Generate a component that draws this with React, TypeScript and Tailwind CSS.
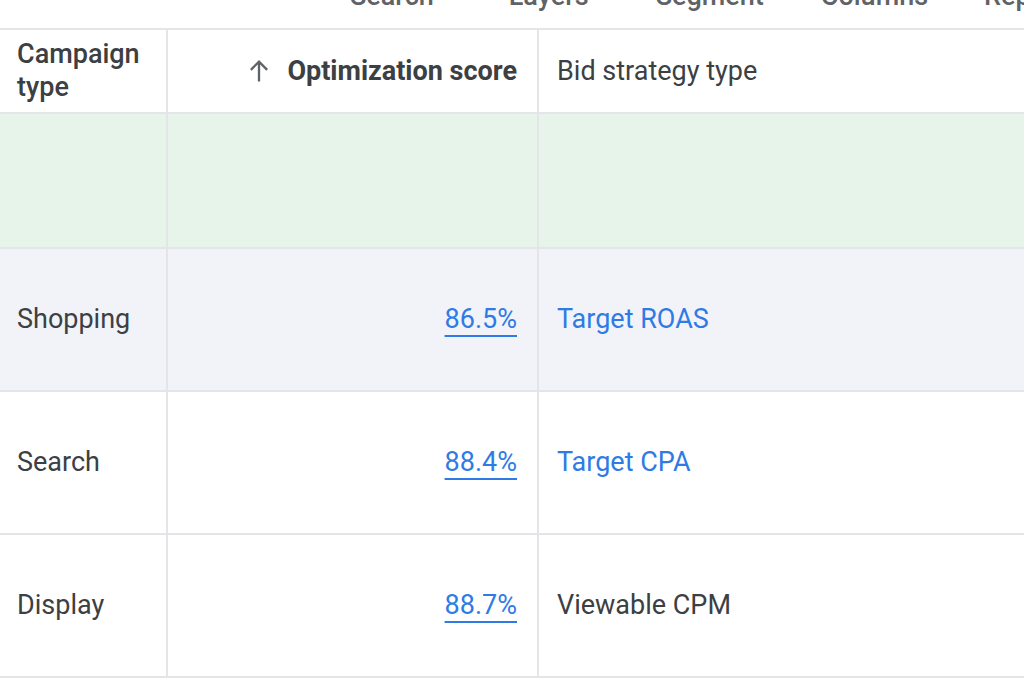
import React from 'react';

type Row = {
  type: string;
  score: string;
  strategy: string;
  link: boolean;
  bg: string;
};

const rows: Row[] = [
  { type: 'Shopping', score: '86.5%', strategy: 'Target ROAS', link: true, bg: 'bg-[#f1f3f8]' },
  { type: 'Search', score: '88.4%', strategy: 'Target CPA', link: true, bg: 'bg-white' },
  { type: 'Display', score: '88.7%', strategy: 'Viewable CPM', link: false, bg: 'bg-white' },
];

const tools = [
  { label: 'Search', cls: 'ml-[350px]' },
  { label: 'Layers', cls: 'ml-[75px]' },
  { label: 'Segment', cls: 'ml-[67px]' },
  { label: 'Columns', cls: 'ml-[57px]' },
  { label: 'Reports', cls: 'ml-[56px]' },
];

export default function App() {
  return (
    <div className="w-[1024px] h-[683px] overflow-hidden bg-white text-[#3c4043] font-['Roboto',sans-serif]">
      {/* toolbar, only the bottom of the labels is visible */}
      <div className="h-[28px] overflow-hidden">
        <div className="flex -mt-[24px] text-[27px] font-medium text-[#5f6368] whitespace-nowrap">
          {tools.map((t) => (
            <span key={t.label} className={t.cls}>
              {t.label}
            </span>
          ))}
        </div>
      </div>

      <div className="border-t-2 border-[#e3e5e8]">
        {/* header */}
        <div className="grid grid-cols-[168px_371px_1fr] h-[84px] border-b-2 border-[#e3e5e8]">
          <div className="flex items-center pl-[17px] border-r-2 border-[#e3e5e8] text-[27px] leading-[33px] font-medium">
            Campaign
            <br />
            type
          </div>
          <div className="flex items-center justify-end gap-[14px] pr-[20px] border-r-2 border-[#e3e5e8] text-[27px] font-bold">
            <svg width="28" height="28" viewBox="0 0 24 24" fill="none" stroke="#5f6368" strokeWidth="2">
              <path d="M12 21V4M5 11l7-7 7 7" />
            </svg>
            <span>Optimization score</span>
          </div>
          <div className="flex items-center pl-[18px] text-[27px]">Bid strategy type</div>
        </div>

        {/* total / summary row */}
        <div className="grid grid-cols-[168px_371px_1fr] h-[135px] bg-[#e6f4ea] border-b-2 border-[#e3e5e8]">
          <div className="border-r-2 border-[#e3e5e8]" />
          <div className="border-r-2 border-[#e3e5e8]" />
          <div />
        </div>

        {rows.map((r) => (
          <div
            key={r.type}
            className={`grid grid-cols-[168px_371px_1fr] h-[143px] border-b-2 border-[#e3e5e8] text-[27px] ${r.bg}`}
          >
            <div className="flex items-center pl-[17px] border-r-2 border-[#e3e5e8]">{r.type}</div>
            <div className="flex items-center justify-end pr-[20px] border-r-2 border-[#e3e5e8]">
              <span className="text-[#2f7be5] underline decoration-2 underline-offset-[7px]">{r.score}</span>
            </div>
            <div className="flex items-center pl-[18px]">
              <span className={r.link ? 'text-[#2f7be5]' : ''}>{r.strategy}</span>
            </div>
          </div>
        ))}
      </div>
    </div>
  );
}
